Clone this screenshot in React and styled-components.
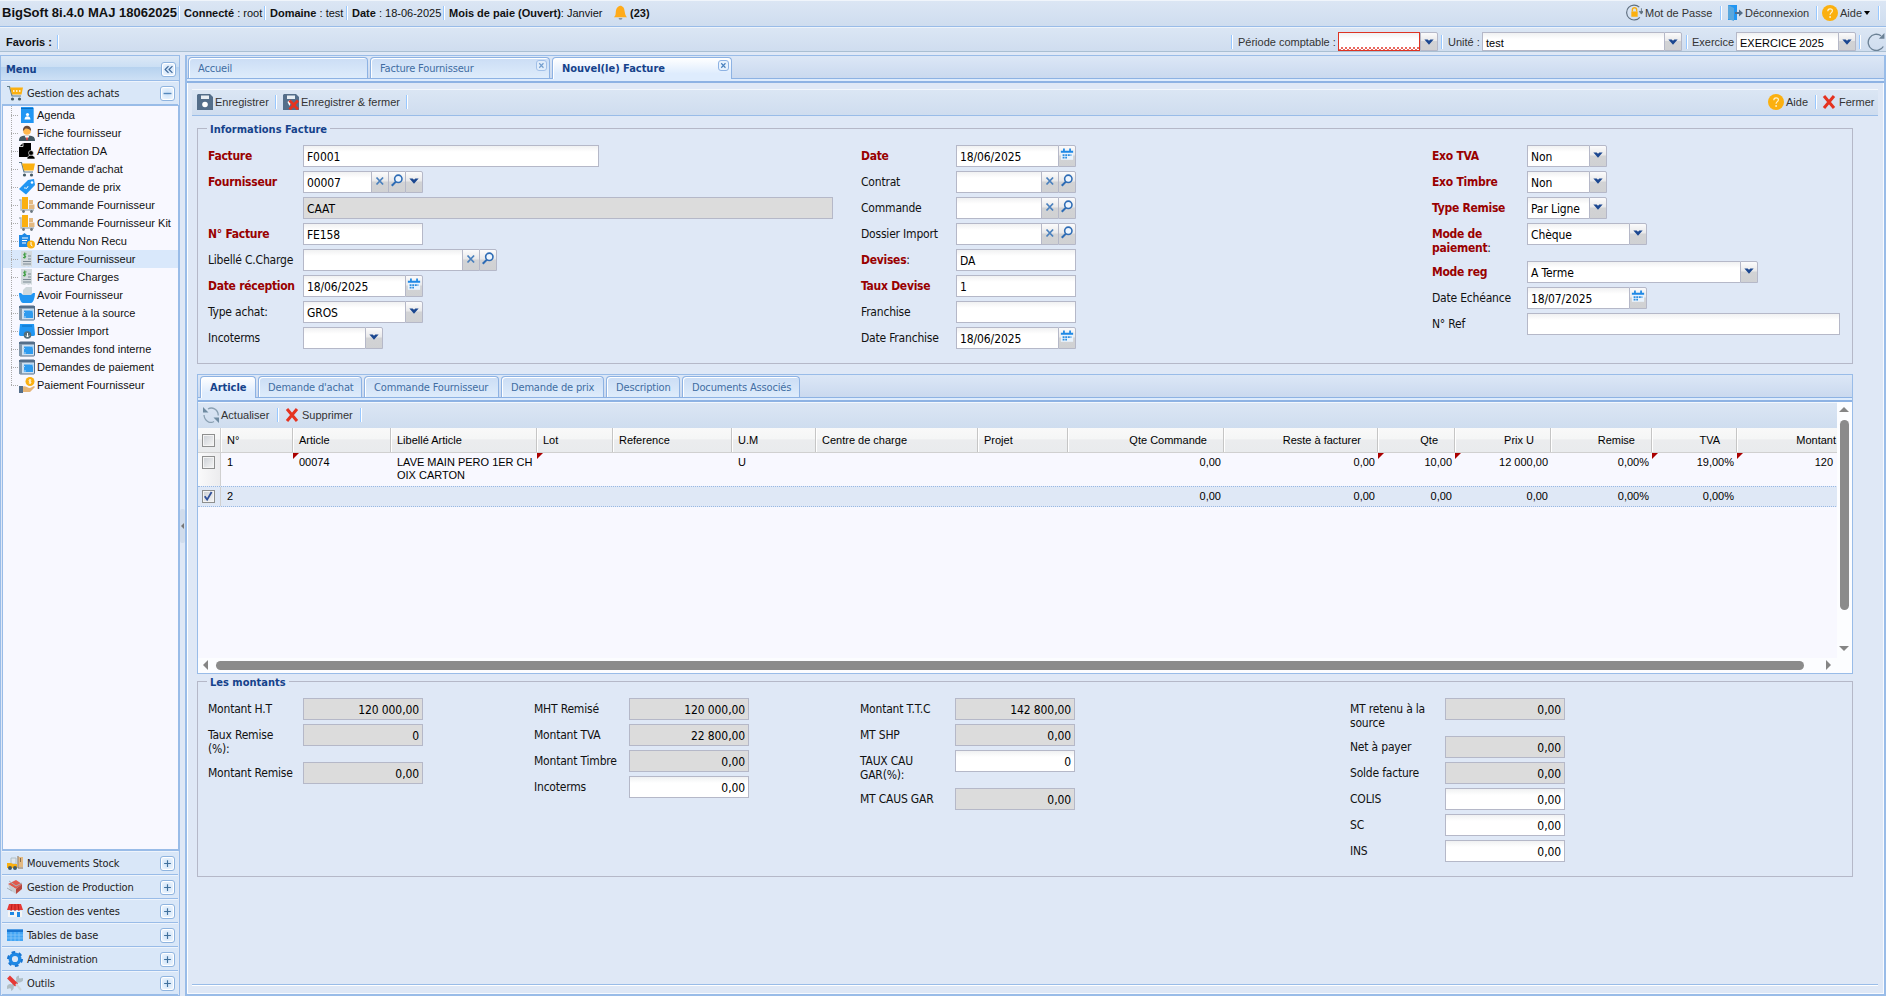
import React from "react";
import styled, { createGlobalStyle, css } from "styled-components";

const tahoma = `"DejaVu Sans Condensed", "DejaVu Sans", sans-serif`;
const arial = `"Liberation Sans", Arial, sans-serif`;

const GlobalStyle = createGlobalStyle`
  * { box-sizing: border-box; }
  body {
    margin: 0;
    background: #dfe8f6;
    font-family: ${arial};
    font-size: 11px;
    color: #111;
    overflow: hidden;
  }
  svg { display: block; flex: none; }
`;

const Page = styled.div`
  display: flex;
  flex-direction: column;
  width: 1886px;
  height: 996px;
  overflow: hidden;
`;

/* ---------- barres du haut ---------- */

const bar = css`
  display: flex;
  align-items: center;
  background: linear-gradient(#dbe6f4, #cfddef);
`;

const TopBar = styled.div`
  ${bar}
  height: 27px;
  flex: none;
  padding: 0 6px 2px 2px;
  border-top: 1px solid #f0f5fb;
  border-bottom: 1px solid #99bce8;
`;

const FavBar = styled.div`
  ${bar}
  height: 25px;
  flex: none;
  padding: 4px 1px 0 6px;
  border-top: 1px solid #eef4fb;
  border-bottom: 1px solid #a9bfd3;
`;

const Spacer = styled.div`
  flex: 1;
`;

const Item = styled.div`
  display: flex;
  align-items: center;
  gap: ${(p) => p.$gap || 0}px;
  width: ${(p) => (p.$w ? p.$w + "px" : "auto")};
  flex: none;
  white-space: pre;
  color: ${(p) => p.$color || "#111"};
  font-size: ${(p) => p.$size || 11}px;
  font-weight: ${(p) => (p.$bold ? "bold" : "normal")};
`;

const Sep = styled.div`
  width: 2px;
  height: 14px;
  flex: none;
  margin: 0 ${(p) => p.$r ?? 4}px 0 ${(p) => p.$l ?? 0}px;
  background: linear-gradient(90deg, #98c8ff 50%, #fff 50%);
`;

const Caret = styled.span`
  margin-left: 0;
  border: 3px solid transparent;
  border-top: 4px solid #000;
  border-bottom: 0;
`;

/* ---------- champs ---------- */

const Box = styled.div`
  display: flex;
  width: ${(p) => p.$w}px;
  height: ${(p) => p.$h || 22}px;
  flex: none;
`;

const Input = styled.div`
  flex: 1;
  min-width: 0;
  overflow: hidden;
  border: 1px solid ${(p) => (p.$invalid ? "#dd3322" : "#b5b8c8")};
  border-right-width: ${(p) => (p.$joined && !p.$invalid ? 0 : 1)}px;
  background: ${(p) => (p.$off ? "#dcdcdc" : "linear-gradient(#f0f1f2, #fff 6px)")};
  padding: 0 3px;
  font-family: ${(p) => (p.$arial ? arial : tahoma)};
  font-size: ${(p) => (p.$arial ? 11 : 12)}px;
  line-height: ${(p) => (p.$arial ? 20 : 22)}px;
  letter-spacing: ${(p) => (p.$arial ? 0 : -0.1)}px;
  text-align: ${(p) => (p.$right ? "right" : "left")};
  white-space: nowrap;
  color: #000;
`;

const Squiggle = styled.div`
  height: 4px;
  margin: 14px -3px 0;
  background: repeating-conic-gradient(#e8685f 0 25%, #fff 0 50%) 0 0 / 4px 4px;
`;

const Trigger = styled.div`
  width: ${(p) => (p.$last ? 18 : 17)}px;
  flex: none;
  display: flex;
  justify-content: center;
  padding-top: ${(p) => p.$top || 2}px;
  border: 1px solid #b5b8c8;
  border-right-width: ${(p) => (p.$last ? 1 : 0)}px;
  border-radius: 0 ${(p) => (p.$last ? 2 : 0)}px 0 0;
  background: linear-gradient(#fbfbfc, #e9e9ea 45%, #d2d3d5 50%, #d0d1d3);
`;

const Row = styled.div`
  display: flex;
  min-height: ${(p) => (p.$tall ? 38 : 26)}px;
`;

const Label = styled.div`
  width: 95px;
  flex: none;
  padding-top: 4px;
  font-family: ${tahoma};
  font-size: 12px;
  line-height: 14px;
  letter-spacing: ${(p) => (p.$req ? -0.27 : -0.2)}px;
  font-weight: ${(p) => (p.$req ? "bold" : "normal")};
  color: ${(p) => (p.$req ? "#990000" : "#111")};
  white-space: pre;
`;

const Colon = styled.span`
  font-weight: normal;
  color: #111;
`;

/* ---------- menu de gauche ---------- */

const Body = styled.div`
  display: flex;
  flex: 1;
  min-height: 0;
  margin-top: 3px;
  background: #dfe8f6;
`;

const West = styled.div`
  display: flex;
  flex-direction: column;
  width: 180px;
  flex: none;
  border: 1px solid #99bce8;
`;

const MenuTitle = styled.div`
  display: flex;
  align-items: center;
  justify-content: space-between;
  height: 25px;
  flex: none;
  padding: 2px 3px 0 5px;
  background: linear-gradient(#dce8f6, #cbdff4 45%, #b6d2ef 46%, #cde0f5);
  border-bottom: 1px solid #99bce8;
  color: #15428b;
  font: bold 11px ${tahoma};
`;

const Tool = styled.div`
  display: flex;
  align-items: center;
  justify-content: center;
  width: 15px;
  height: 15px;
  border: 1px solid #8fb4df;
  border-radius: 3px;
  background: radial-gradient(#c9e0f8, #f8fbff);
  box-shadow: inset 0 0 0 1px #fff;
`;

const AccHead = styled.div`
  display: flex;
  align-items: center;
  height: 24px;
  flex: none;
  margin: 0 1px;
  padding: 0 3px 0 5px;
  border-top: 1px solid #eef4fc;
  border-bottom: 1px solid #99bce8;
  background: #d9e7f8;
  font: 11px ${tahoma};
  letter-spacing: -0.12px;
  color: #222;
`;

const AccText = styled.span`
  flex: 1;
  margin-left: 4px;
`;

const Tree = styled.div`
  flex: 1;
  margin: 0 0 0 1px;
  border: 2px solid #99bce8;
  border-width: 1px 1px 2px 1px;
  background: #f8f8ff;
`;

const Node = styled.div`
  display: flex;
  align-items: center;
  height: 18px;
  padding-left: 8px;
  background: ${(p) => (p.$on ? "#d9e8fb" : "none")};
  white-space: nowrap;
`;

const Elbow = styled.div`
  width: 8px;
  height: 18px;
  flex: none;
  background:
    repeating-linear-gradient(#aaa 0 1px, transparent 1px 2px) 0 0 / 1px ${(p) => (p.$last ? "9px" : "18px")} no-repeat,
    repeating-linear-gradient(90deg, #aaa 0 1px, transparent 1px 2px) 0 9px / 8px 1px no-repeat;
`;

const NodeText = styled.span`
  margin-left: 2px;
`;

const Splitter = styled.div`
  display: flex;
  align-items: center;
  width: 5px;
  flex: none;
`;

const Collapse = styled.div`
  width: 5px;
  height: 34px;
  padding: 14px 1px;
  border-radius: 2px;
  background: #d0dcec;
  &::after {
    content: "";
    display: block;
    border: 3px solid transparent;
    border-left: 0;
    border-right-color: #777;
  }
`;

/* ---------- onglets ---------- */

const Center = styled.div`
  display: flex;
  flex-direction: column;
  flex: 1;
  min-width: 0;
  border: 2px solid #99bce8;
  border-top-width: 1px;
`;

const Strip = styled.div`
  display: flex;
  gap: 2px;
  height: 23px;
  flex: none;
  padding: 1px 0 0 ${(p) => p.$left || 1}px;
  background: linear-gradient(#dce7f6, #cad9ef);
  border-bottom: 1px solid #8db2e3;
`;

const StripLine = styled.div`
  height: 4px;
  flex: none;
  background: #deecfd;
  border-bottom: 2px solid #8db2e3;
`;

const Tab = styled.div`
  position: relative;
  display: flex;
  align-items: center;
  width: ${(p) => p.$w}px;
  height: ${(p) => (p.$on ? 22 : 21)}px;
  flex: none;
  padding-left: 9px;
  border: 1px solid #8db2e3;
  border-bottom: 0;
  border-radius: 4px 4px 0 0;
  box-shadow: inset 1px 1px 0 #fff;
  background: ${(p) => (p.$on ? "linear-gradient(#fff, #deecfd 75%)" : "linear-gradient(#cbddf5, #deecfb)")};
  font-family: ${tahoma};
  font-size: 11px;
  letter-spacing: ${(p) => (p.$on ? -0.02 : -0.16)}px;
  font-weight: ${(p) => (p.$on ? "bold" : "normal")};
  color: ${(p) => (p.$on ? "#15428b" : "#416da3")};
  white-space: nowrap;
`;

const TabClose = styled.div`
  position: absolute;
  top: 2px;
  right: 2px;
  display: flex;
  align-items: center;
  justify-content: center;
  width: 11px;
  height: 11px;
  border: 1px solid #8db2e3;
  border-radius: 3px;
  background: #e8f2fd;
  opacity: ${(p) => (p.$dim ? 0.7 : 1)};
`;

const Panel = styled.div`
  display: flex;
  flex-direction: column;
  flex: 1;
  padding: 6px 5px 0 5px;
  border: 1px solid #f7faff;
  border-width: 0 1px 1px 0;
  box-shadow: inset 1px 0 0 #fff;
`;

const Toolbar = styled.div`
  ${bar}
  height: ${(p) => p.$h || 27}px;
  flex: none;
  padding: 0 3px 2px 5px;
  border-top: 1px solid #f2f7fd;
  border-bottom: ${(p) => (p.$flat ? 0 : 1)}px solid #99bce8;
`;

const Content = styled.div`
  flex: 1;
  padding: 12px 25px 0 5px;
`;

const Footer = styled.div`
  height: 9px;
  flex: none;
  border-top: 1px solid #99bce8;
  box-shadow: inset 0 1px 0 #fff;
`;

const Fieldset = styled.div`
  display: flex;
  height: ${(p) => p.$h}px;
  padding: 16px 0 0 10px;
  border: 1px solid #b5b8c8;
  position: relative;
`;

const Legend = styled.div`
  position: absolute;
  top: -7px;
  left: 9px;
  padding: 0 3px;
  background: #dfe8f6;
  font: bold 11px/15px ${tahoma};
  color: #15428b;
`;

const Column = styled.div`
  width: ${(p) => p.$w}px;
  flex: none;
`;

/* ---------- grille ---------- */

const GridPanel = styled.div`
  display: flex;
  flex-direction: column;
  height: 300px;
  margin: 10px 0 7px;
  border: 1px solid #99bce8;
`;

const GridMain = styled.div`
  display: flex;
  flex: 1;
  min-height: 0;
  background: #fcfdff;
`;

const GridLeft = styled.div`
  display: flex;
  flex-direction: column;
  width: 1639px;
  flex: none;
  overflow: hidden;
`;

const GridBody = styled.div`
  flex: 1;
  background: #f8f8ff;
`;

const GridRow = styled.div`
  display: flex;
  width: 1800px;
  height: ${(p) => p.$h}px;
  ${(p) =>
    p.$head &&
    css`
      background: linear-gradient(#f9f9f9, #f5f6f6 45%, #ebecee 50%, #e9ebed);
      border-bottom: 1px solid #d0d0d0;
    `}
  ${(p) =>
    p.$on &&
    css`
      background: #dfe8f6;
      border: dotted #98b8e4;
      border-width: 1px 0;
    `}
`;

const Cell = styled.div`
  position: relative;
  width: ${(p) => p.$w}px;
  flex: none;
  overflow: hidden;
  padding: ${(p) => (p.$head ? "6px 16px 0 6px" : "3px 3px 0 6px")};
  line-height: 13px;
  text-align: ${(p) => (p.$right ? "right" : "left")};
  white-space: pre;
  color: #000;
  ${(p) => p.$head && "border-right: 1px solid #c5c5c5; box-shadow: inset 1px 0 0 #fff;"}
  ${(p) =>
    p.$dirty &&
    css`
      &::before {
        content: "";
        position: absolute;
        left: 0;
        top: 0;
        border: 3px solid transparent;
        border-top-color: #a00;
        border-left-color: #a00;
      }
    `}
`;

const CheckCell = styled.div`
  width: 23px;
  flex: none;
  padding: ${(p) => p.$top}px 0 0 4px;
  border-right: 1px solid #d0d0d0;
  ${(p) => p.$shade && "background: linear-gradient(90deg, #fafafb, #ececee);"}
`;

const Check = styled.div`
  width: 13px;
  height: 13px;
  border: 1px solid #8e8f8f;
  background: linear-gradient(135deg, #cbcfd5, #f6f6f6);
  box-shadow: inset 0 0 0 1px #f4f4f4;
`;

const VScroll = styled.div`
  display: flex;
  flex-direction: column;
  align-items: center;
  flex: 1;
  padding: 5px 1px 22px 0;
`;

const VThumb = styled.div`
  width: 9px;
  height: 190px;
  margin-top: 8px;
  border-radius: 5px;
  background: #8b8b8b;
`;

const HScroll = styled.div`
  display: flex;
  align-items: center;
  height: 15px;
  flex: none;
  background: #fcfdff;
  padding: 0 6px 1px 5px;
`;

const HThumb = styled.div`
  width: 1588px;
  height: 9px;
  margin-left: 8px;
  border-radius: 5px;
  background: #8b8b8b;
`;

const Arrow = styled.div`
  border: 5px solid transparent;
  ${(p) => p.$dir === "up" && "border-top: 0; border-bottom-color: #858585;"}
  ${(p) => p.$dir === "down" && "border-bottom: 0; border-top-color: #858585;"}
  ${(p) => p.$dir === "left" && "border-left: 0; border-right-color: #858585;"}
  ${(p) => p.$dir === "right" && "border-right: 0; border-left-color: #858585;"}
`;

/* ---------- icones ---------- */

const Svg = ({ s = 16, children }) => (
  <svg width={s} height={s} viewBox="0 0 16 16">
    {children}
  </svg>
);

const icons = {
  cart: (
    <>
      <path d="M0 1.5h2.5L5 11h9" fill="none" stroke="#607d8b" strokeWidth="1.2" />
      <path d="M3 2.5h13l-1.5 7H5z" fill="#fbb010" />
      <circle cx="5.5" cy="14" r="1.6" fill="#455a64" />
      <circle cx="12.5" cy="14" r="1.6" fill="#455a64" />
    </>
  ),
  cartDots: (
    <>
      <path d="M0 1.5h2.5L5 11h9" fill="none" stroke="#607d8b" strokeWidth="1.2" />
      <path d="M3 2.5h13l-1.5 7H5z" fill="#fbb010" />
      <path d="M6 6h8" stroke="#fff" strokeWidth="1.6" strokeDasharray="1.5 1.5" />
      <circle cx="5.5" cy="14" r="1.6" fill="#455a64" />
      <circle cx="12.5" cy="14" r="1.6" fill="#455a64" />
    </>
  ),
  agenda: (
    <>
      <path d="M2 0h12l1 2v14H2z" fill="#2196f3" />
      <path d="M2 1.500h12" stroke="#0d6fc0" />
      <path d="M14.500 2v14" stroke="#64b5f6" />
      <circle cx="8.500" cy="7.500" r="1.600" fill="#fff" />
      <path d="M5.500 12.500c0-4.500 6-4.500 6 0z" fill="#fff" />
    </>
  ),
  person: (
    <>
      <path d="M0 16c0-5 3-5.500 8-5.500s8 .5 8 5.500z" fill="#455a64" />
      <path d="M5.500 10.500L8 15l2.500-4.500z" fill="#fff" />
      <path d="M8 11.500l-1 2.500 1 2 1-2z" fill="#d32f2f" />
      <circle cx="8" cy="6" r="3.800" fill="#ffb74d" />
      <path d="M4 6c-1-7 9-7 8 0-1-2-5-3-6-2z" fill="#6b4a3a" />
    </>
  ),
  docPerson: (
    <>
      <path d="M0 4l4-4h8v9l-3 5H0z" fill="#000" />
      <path d="M0 3.500h4V0" fill="none" stroke="#fff" strokeWidth=".8" />
      <circle cx="12" cy="10" r="2.500" fill="#000" stroke="#fff" strokeWidth=".6" />
      <path d="M8 16c0-5 8-5 8 0z" fill="#000" stroke="#fff" strokeWidth=".5" />
    </>
  ),
  tag: (
    <>
      <path d="M0 10L9 1l6-1 1 6-9 9.500z" fill="#2196f3" />
      <circle cx="13" cy="3.500" r="1.300" fill="#fff" />
      <path d="M5 9.500c1-2 2 1 3-.5s1-2 1-2" fill="none" stroke="#fff" />
    </>
  ),
  trolley: (
    <>
      <path d="M0 3h2v10h13" fill="none" stroke="#a9b4bb" strokeWidth="1.300" />
      <path d="M3 0h6v12H3z" fill="#fbb010" />
      <path d="M10 3h4v4h-4zM10 7.500h5.500V12H10z" fill="#e3b981" />
      <circle cx="4.500" cy="14.500" r="1.400" fill="#6b7780" />
      <circle cx="12.500" cy="14.500" r="1.400" fill="#6b7780" />
    </>
  ),
  clipClock: (
    <>
      <path d="M0 2h3L5.500 0 8 2h3v12H0z" fill="#1e88e5" />
      <path d="M3 5h6M3 7.500h5M3 10h4" stroke="#fff" />
      <circle cx="12" cy="11.500" r="4" fill="#fbb010" />
      <path d="M12 9v3l1.500 1" fill="none" stroke="#fff" />
    </>
  ),
  invoice: (
    <>
      <path d="M2 0h11v16l-1.500-1-2 1-2-1-2 1L2 15z" fill="#d3dade" />
      <path d="M7.500 3C5 2 4 4 5.500 4.500S7.500 7 4 6.500M5.700 1.500v6" fill="none" stroke="#43a047" strokeWidth="1.100" />
      <path d="M9 5h3M9 8h3M4 10.500h8M4 13h8" stroke="#7d8b95" />
    </>
  ),
  bag: (
    <>
      <path d="M4 8V3l3-3h6v8z" fill="#cfd8dc" />
      <path d="M0 6h2l2 2h8l2-2h2c0 5-2 10-4 10H4c-2 0-4-5-4-10z" fill="#2196f3" />
    </>
  ),
  window: (
    <>
      <rect x=".500" y="1" width="15" height="14" rx="1" fill="#cfe0f0" stroke="#546e8a" />
      <path d="M0 1h16v2.500H0z" fill="#546e8a" />
      <path d="M0 3h3v12H0z" fill="#8296a8" />
      <path d="M5 5.500h9v7.500H5z" fill="#2e9bef" />
      <path d="M4 7.500h2M11 5h3v2.500M4 12h3" stroke="#a9d3f7" strokeWidth="1" fill="none" />
    </>
  ),
  folder: (
    <>
      <path d="M1 1h14l1 10c0 2-1 2-3 2H3c-2 0-3 0-3-2z" fill="#2196f3" />
      <path d="M3 3h10" stroke="#0d6fc0" />
      <circle cx="8.500" cy="12" r="3.800" fill="#546e7a" />
      <path d="M8.500 10v4M7 12.500l1.500 1.500 1.500-1.500" fill="none" stroke="#fff" />
    </>
  ),
  handCoin: (
    <>
      <circle cx="11" cy="4.500" r="4.500" fill="#fbb010" />
      <path d="M11 2v5M12.300 3.200c-3-.8-3 1.200-1.300 1.400s1.500 2-1.200 1.200" fill="none" stroke="#fff" strokeWidth=".8" />
      <path d="M3 10c3-2 5 1 8 1l4-2 1 1-5 5H3z" fill="#e6b577" />
      <path d="M0 9h4v7H0z" fill="#546e8a" />
    </>
  ),
  forklift: (
    <>
      <path d="M4 3h5v6H4z" fill="#dfe6ec" stroke="#b0bec5" />
      <path d="M0 8h4l2 1h4v4H0z" fill="#fbb010" />
      <path d="M11.500 2H16v10h-4.500z" fill="#e3b981" />
      <path d="M11 1v12h5M13.500 3v4" fill="none" stroke="#8d6e4a" />
      <circle cx="3" cy="13" r="2" fill="#455a64" />
      <circle cx="8" cy="13" r="2" fill="#455a64" />
    </>
  ),
  bricks: (
    <>
      <path d="M1 5l8-4 6 4-6 5z" fill="#e05a4d" />
      <path d="M1 5l8 5v5L3 11z" fill="#c8cdd2" />
      <path d="M9 10l6-5v5l-6 5z" fill="#b8473d" />
      <path d="M0 9l5 3M2 2l7 5 6-3" stroke="#a5b0b8" fill="none" />
    </>
  ),
  shop: (
    <>
      <path d="M2 1h12l2 6H0z" fill="#e53935" />
      <path d="M5 1L4 8M8 1v7M11 1l1 7" stroke="#b71c1c" />
      <path d="M1 8h14v6H1z" fill="#f5f5f5" />
      <path d="M3 9h4v3H3zM10 9h3v5h-3z" fill="#1e88e5" />
    </>
  ),
  table: (
    <>
      <path d="M0 2.500h16V14H0z" fill="#42a5f5" />
      <path d="M0 2.500h16v2.500H0z" fill="#1976d2" />
      <path d="M0 8h16M0 11h16M4 5v9M8 5v9M12 5v9" stroke="#8cc8f8" strokeWidth=".7" />
    </>
  ),
  gear: (
    <>
      <circle cx="8" cy="8" r="4.800" fill="none" stroke="#1e88e5" strokeWidth="3.400" />
      <circle cx="8" cy="8" r="7" fill="none" stroke="#1976d2" strokeWidth="2" strokeDasharray="3.660 3.660" />
    </>
  ),
  tools: (
    <>
      <path d="M3 13L13 4" stroke="#b0bec5" strokeWidth="3" />
      <path d="M16 3a3.500 3.500 0 1 1-4-2.500v3z M0 14a3.500 3.500 0 1 1 4 2v-3z" fill="#b0bec5" />
      <path d="M1.500 2l8 8" stroke="#e53935" strokeWidth="4" />
      <path d="M9 9l5 6" stroke="#cfd8dc" strokeWidth="2" />
    </>
  ),
  save: (
    <>
      <path d="M1 0h12l3 3v13H0V1z" fill="#546e8a" />
      <path d="M4 1.500h8v3.500H4z" fill="#e8eef4" />
      <circle cx="8" cy="10.500" r="2.800" fill="#fff" />
    </>
  ),
  saveClose: (
    <>
      <path d="M1 0h12l3 3v13H0V1z" fill="#546e8a" />
      <path d="M4 1.500h8v3.500H4z" fill="#e8eef4" />
      <path d="M4.500 8c1-1.500 2.500-2 4-1l-2 5z" fill="#fff" />
      <path d="M6.500 6.500l8.500 9M15 6.500l-8.500 9" stroke="#e53320" strokeWidth="2.800" />
    </>
  ),
  cross: <path d="M3 2l10 12M13 2L3 14" stroke="#e53320" strokeWidth="3" />,
  help: (
    <>
      <circle cx="8" cy="8" r="8" fill="#fbb010" />
      <path d="M5.800 6.200c0-3.200 4.600-3 4.600-.4 0 1.800-2.300 1.900-2.300 3.900" fill="none" stroke="#fff3d0" strokeWidth="1.200" />
      <circle cx="8.100" cy="12" r=".9" fill="#fff3d0" />
    </>
  ),
  lock: (
    <>
      <path d="M12.500 3A7 7 0 1 0 13 12.500" fill="none" stroke="#607080" strokeWidth="1.100" />
      <path d="M14.500 4v5M12.500 7l2 2.500 1.500-2.500z" fill="#607080" stroke="#607080" strokeWidth=".8" />
      <path d="M6 7V5.500a2 2 0 0 1 4 0V7" fill="none" stroke="#fbb010" strokeWidth="1.300" />
      <path d="M5 7h6v5H5z" fill="#fbb010" />
    </>
  ),
  door: (
    <>
      <path d="M1 0h9v15H1z" fill="#2196f3" />
      <path d="M1 0l6 3v13l-6-2z" fill="#5aa7dd" />
      <path d="M8 7h4V4.500L16 8l-4 3.500V9H8z" fill="#546e8a" />
    </>
  ),
  bell: (
    <>
      <path d="M1 13c3-2 1-6 3-9.500S9 0 11 2.500 12 11 15 13z" fill="#ffab1a" />
      <path d="M6 14h4c0 2-4 2-4 0z" fill="#6d7b88" />
    </>
  ),
  reload: (
    <>
      <path d="M12.500 2.500A7.200 7.200 0 1 0 14.500 12" fill="none" stroke="#6c8296" strokeWidth="1.200" />
      <path d="M10.500 5H15.500V0z" fill="#6c8296" />
    </>
  ),
  refresh: (
    <>
      <path d="M5 2C9-.5 15 2 15.300 8.500M11 14.500C7 17 1.500 14 1 8" fill="none" stroke="#8aa0b2" strokeWidth="1.300" />
      <path d="M0 0v5.500h5.500zM16 16v-5.500h-5.500z" fill="#6f8ba1" />
    </>
  ),
  clear: <path d="M4 4l7.500 8M11.500 4L4 12" stroke="#4a80bd" strokeWidth="2" />,
  search: (
    <>
      <circle cx="9.500" cy="5.500" r="4.200" fill="#eef6ff" stroke="#2e6cb5" strokeWidth="1.800" />
      <path d="M6.500 9L2 13.500" stroke="#2e6cb5" strokeWidth="2.400" />
    </>
  ),
  down: <path d="M2.700 5h3.800L8 6.600 9.500 5h3.800L8 11z" fill="#1b4790" />,
  date: (
    <>
      <path d="M1 3h14v10.500H1z" fill="#e9f3fd" />
      <path d="M1 3h14v2.500H1zM3.500 .5h2v3h-2zM10.500 .5h2v3h-2z" fill="#1e88e5" />
      <path d="M3 8h10M3 11h5" stroke="#2b8de0" strokeWidth="2" strokeDasharray="2.200 .8" />
    </>
  ),
  tick: <path d="M2.500 7.500L6 12.500 12.500 1.500" fill="none" stroke="#31519a" strokeWidth="2.600" />,
  plus: <path d="M8 2v12M2 8h12" stroke="#41719c" strokeWidth="2" />,
  minus: <path d="M1 8h14" stroke="#5588bb" strokeWidth="2.400" />,
  collapse: <path d="M8 2L2 8l6 6M15 2L9 8l6 6" fill="none" stroke="#3a6496" strokeWidth="2" />,
};

const Icon = ({ name, s }) => <Svg s={s}>{icons[name]}</Svg>;

/* ---------- composants ---------- */

const Field = ({ label, colon, req, w = 120, value, triggers = [], tall, off, right }) => (
  <Row $tall={tall}>
    <Label $req={req}>
      {label}
      {colon && <Colon>:</Colon>}
    </Label>
    <Box $w={w}>
      <Input $joined={triggers.length > 0} $off={off} $right={right}>
        {value}
      </Input>
      {triggers.map((t, i) => (
        <Trigger key={t} $last={i === triggers.length - 1}>
          <Icon name={t} s={14} />
        </Trigger>
      ))}
    </Box>
  </Row>
);

const Combo = ({ w, value, invalid }) => (
  <Box $w={w} $h={19}>
    <Input $arial $joined $invalid={invalid}>
      {invalid ? <Squiggle /> : value}
    </Input>
    <Trigger $last>
      <Icon name="down" s={14} />
    </Trigger>
  </Box>
);

const menu = [
  ["agenda", "Agenda"],
  ["person", "Fiche fournisseur"],
  ["docPerson", "Affectation DA"],
  ["cart", "Demande d'achat"],
  ["tag", "Demande de prix"],
  ["trolley", "Commande Fournisseur"],
  ["trolley", "Commande Fournisseur Kit"],
  ["clipClock", "Attendu Non Recu"],
  ["invoice", "Facture Fournisseur"],
  ["invoice", "Facture Charges"],
  ["bag", "Avoir Fournisseur"],
  ["window", "Retenue à la source"],
  ["folder", "Dossier Import"],
  ["window", "Demandes fond interne"],
  ["window", "Demandes de paiement"],
  ["handCoin", "Paiement Fournisseur"],
];

const sections = [
  ["forklift", "Mouvements Stock"],
  ["bricks", "Gestion de Production"],
  ["shop", "Gestion des ventes"],
  ["table", "Tables de base"],
  ["gear", "Administration"],
  ["tools", "Outils"],
];

const columns = [
  { t: "N°", w: 72, v: ["1", "2"] },
  { t: "Article", w: 98, v: ["00074"], dirty: true },
  { t: "Libellé Article", w: 146, v: ["LAVE MAIN PERO 1ER CH\nOIX CARTON"] },
  { t: "Lot", w: 76, v: [], dirty: true },
  { t: "Reference", w: 119, v: [] },
  { t: "U.M", w: 84, v: ["U"] },
  { t: "Centre de charge", w: 162, v: [] },
  { t: "Projet", w: 90, v: [] },
  { t: "Qte Commande", w: 156, v: ["0,00", "0,00"], right: true },
  { t: "Reste à facturer", w: 154, v: ["0,00", "0,00"], right: true },
  { t: "Qte", w: 77, v: ["10,00", "0,00"], right: true, dirty: true },
  { t: "Prix U", w: 96, v: ["12 000,00", "0,00"], right: true, dirty: true },
  { t: "Remise", w: 101, v: ["0,00%", "0,00%"], right: true },
  { t: "TVA", w: 85, v: ["19,00%", "0,00%"], right: true, dirty: true },
];

const subTabs = [
  ["Demande d'achat", 104],
  ["Commande Fournisseur", 135],
  ["Demande de prix", 103],
  ["Description", 74],
  ["Documents Associés", 118],
];

function Header() {
  return (
    <>
      <TopBar>
        <Item $w={176} $size={13} $bold>BigSoft 8i.4.0 MAJ 18062025</Item>
        <Sep />
        <Item $w={80}><b>Connecté</b> : root</Item>
        <Sep />
        <Item $w={76}><b>Domaine</b> : test</Item>
        <Sep />
        <Item $w={91}><b>Date</b> : 18-06-2025</Item>
        <Sep />
        <Item $w={164}><b>Mois de paie (Ouvert)</b>: Janvier</Item>
        <Item $bold $gap={2}><Icon name="bell" s={15} />(23)</Item>
        <Spacer />
        <Item $w={94} $gap={2} $color="#333"><Icon name="lock" s={17} />Mot de Passe</Item>
        <Sep $r={5} />
        <Item $w={89} $gap={2} $color="#333"><Icon name="door" />Déconnexion</Item>
        <Sep />
        <Item $w={56} $gap={2} $color="#333"><Icon name="help" />Aide<Caret /></Item>
        <Sep $r={0} />
      </TopBar>
      <FavBar>
        <Item $w={51} $bold>Favoris :</Item>
        <Sep />
        <Spacer />
        <Sep $r={5} />
        <Item $w={100} $color="#333">Période comptable :</Item>
        <Combo w={100} invalid />
        <Sep $l={3} $r={5} />
        <Item $w={34} $color="#333">Unité :</Item>
        <Combo w={200} value="test" />
        <Sep $l={4} />
        <Item $w={44} $color="#333">Exercice</Item>
        <Combo w={120} value="EXERCICE 2025" />
        <Sep $l={3} $r={6} />
        <Icon name="reload" s={18} />
      </FavBar>
    </>
  );
}

function Menu() {
  return (
    <West>
      <MenuTitle>
        Menu
        <Tool><Icon name="collapse" s={9} /></Tool>
      </MenuTitle>
      <AccHead>
        <Icon name="cartDots" />
        <AccText>Gestion des achats</AccText>
        <Tool><Icon name="minus" s={9} /></Tool>
      </AccHead>
      <Tree>
        {menu.map(([icon, text], i) => (
          <Node key={text} $on={i === 8}>
            <Elbow $last={i === menu.length - 1} />
            <Icon name={icon} />
            <NodeText>{text}</NodeText>
          </Node>
        ))}
      </Tree>
      {sections.map(([icon, text]) => (
        <AccHead key={text}>
          <Icon name={icon} />
          <AccText>{text}</AccText>
          <Tool><Icon name="plus" s={9} /></Tool>
        </AccHead>
      ))}
    </West>
  );
}

function InfosFacture() {
  return (
    <Fieldset $h={236}>
      <Legend>Informations Facture</Legend>
      <Column $w={653}>
        <Field req label="Facture" w={296} value="F0001" />
        <Field req label="Fournisseur" value="00007" triggers={["clear", "search", "down"]} />
        <Field label="" w={530} value="CAAT" off />
        <Field req label="N° Facture" value="FE158" />
        <Field label="Libellé C.Charge" w={194} triggers={["clear", "search"]} />
        <Field req label="Date réception" value="18/06/2025" triggers={["date"]} />
        <Field label="Type achat:" value="GROS" triggers={["down"]} />
        <Field label="Incoterms" w={80} triggers={["down"]} />
      </Column>
      <Column $w={571}>
        <Field req label="Date" value="18/06/2025" triggers={["date"]} />
        <Field label="Contrat" triggers={["clear", "search"]} />
        <Field label="Commande" triggers={["clear", "search"]} />
        <Field label="Dossier Import" triggers={["clear", "search"]} />
        <Field req label="Devises" colon value="DA" />
        <Field req label="Taux Devise" value="1" />
        <Field label="Franchise" />
        <Field label="Date Franchise" value="18/06/2025" triggers={["date"]} />
      </Column>
      <Column $w={408}>
        <Field req label="Exo TVA" w={80} value="Non" triggers={["down"]} />
        <Field req label="Exo Timbre" w={80} value="Non" triggers={["down"]} />
        <Field req label="Type Remise" w={80} value="Par Ligne" triggers={["down"]} />
        <Field req tall label={"Mode de\npaiement"} colon value="Chèque" triggers={["down"]} />
        <Field req label="Mode reg" w={231} value="A Terme" triggers={["down"]} />
        <Field label="Date Echéance" value="18/07/2025" triggers={["date"]} />
        <Field label="N° Ref" w={313} />
      </Column>
    </Fieldset>
  );
}

function Articles() {
  return (
    <GridPanel>
      <Strip $left={2}>
        <Tab $w={56} $on>Article</Tab>
        {subTabs.map(([text, w]) => (
          <Tab key={text} $w={w}>{text}</Tab>
        ))}
      </Strip>
      <StripLine />
      <GridMain>
        <GridLeft>
          <Toolbar $flat $h={26}>
            <Item $w={74} $gap={2} $color="#333"><Icon name="refresh" />Actualiser</Item>
            <Sep $r={5} />
            <Item $w={76} $gap={2} $color="#333"><Icon name="cross" />Supprimer</Item>
            <Sep />
          </Toolbar>
          <GridRow $h={25} $head>
            <CheckCell $top={6}><Check /></CheckCell>
            {columns.map((c) => (
              <Cell key={c.t} $w={c.w} $right={c.right} $head>{c.t}</Cell>
            ))}
            <Cell $w={116} $right $head>Montant</Cell>
          </GridRow>
          <GridBody>
            <GridRow $h={33}>
              <CheckCell $top={3} $shade><Check /></CheckCell>
              {columns.map((c) => (
                <Cell key={c.t} $w={c.w} $right={c.right} $dirty={c.dirty}>{c.v[0]}</Cell>
              ))}
              <Cell $w={99} $right $dirty>120</Cell>
            </GridRow>
            <GridRow $h={21} $on>
              <CheckCell $top={3}><Check><Icon name="tick" s={11} /></Check></CheckCell>
              {columns.map((c) => (
                <Cell key={c.t} $w={c.w} $right={c.right}>{c.v[1]}</Cell>
              ))}
            </GridRow>
          </GridBody>
          <HScroll>
            <Arrow $dir="left" />
            <HThumb />
            <Spacer />
            <Arrow $dir="right" />
          </HScroll>
        </GridLeft>
        <VScroll>
          <Arrow $dir="up" />
          <VThumb />
          <Spacer />
          <Arrow $dir="down" />
        </VScroll>
      </GridMain>
    </GridPanel>
  );
}

function Montants() {
  return (
    <Fieldset $h={196}>
      <Legend>Les montants</Legend>
      <Column $w={326}>
        <Field right off label="Montant H.T" value="120 000,00" />
        <Field right off tall label={"Taux Remise\n(%):"} value="0" />
        <Field right off label="Montant Remise" value="0,00" />
      </Column>
      <Column $w={326}>
        <Field right off label="MHT Remisé" value="120 000,00" />
        <Field right off label="Montant TVA" value="22 800,00" />
        <Field right off label="Montant Timbre" value="0,00" />
        <Field right label="Incoterms" value="0,00" />
      </Column>
      <Column $w={490}>
        <Field right off label="Montant T.T.C" value="142 800,00" />
        <Field right off label="MT SHP" value="0,00" />
        <Field right tall label={"TAUX CAU\nGAR(%):"} value="0" />
        <Field right off label="MT CAUS GAR" value="0,00" />
      </Column>
      <Column $w={326}>
        <Field right off tall label={"MT retenu à la\nsource"} value="0,00" />
        <Field right off label="Net à payer" value="0,00" />
        <Field right off label="Solde facture" value="0,00" />
        <Field right label="COLIS" value="0,00" />
        <Field right label="SC" value="0,00" />
        <Field right label="INS" value="0,00" />
      </Column>
    </Fieldset>
  );
}

function App() {
  return (
    <Page>
      <GlobalStyle />
      <Header />
      <Body>
        <Menu />
        <Splitter>
          <Collapse />
        </Splitter>
        <Center>
          <Strip>
            <Tab $w={180}>Accueil</Tab>
            <Tab $w={180}>
              Facture Fournisseur
              <TabClose $dim><Icon name="clear" s={9} /></TabClose>
            </Tab>
            <Tab $w={180} $on>
              Nouvel(le) Facture
              <TabClose><Icon name="clear" s={9} /></TabClose>
            </Tab>
          </Strip>
          <StripLine />
          <Panel>
            <Toolbar>
              <Item $w={73} $gap={2} $color="#333"><Icon name="save" />Enregistrer</Item>
              <Sep $l={5} $r={6} />
              <Item $w={118} $gap={2} $color="#333"><Icon name="saveClose" />Enregistrer &amp; fermer</Item>
              <Sep $l={5} />
              <Spacer />
              <Item $w={47} $gap={2} $color="#333"><Icon name="help" />Aide</Item>
              <Sep />
              <Item $w={54} $gap={2} $color="#333"><Icon name="cross" />Fermer</Item>
            </Toolbar>
            <Content>
              <InfosFacture />
              <Articles />
              <Montants />
            </Content>
            <Footer />
          </Panel>
        </Center>
      </Body>
    </Page>
  );
}

export default App;
